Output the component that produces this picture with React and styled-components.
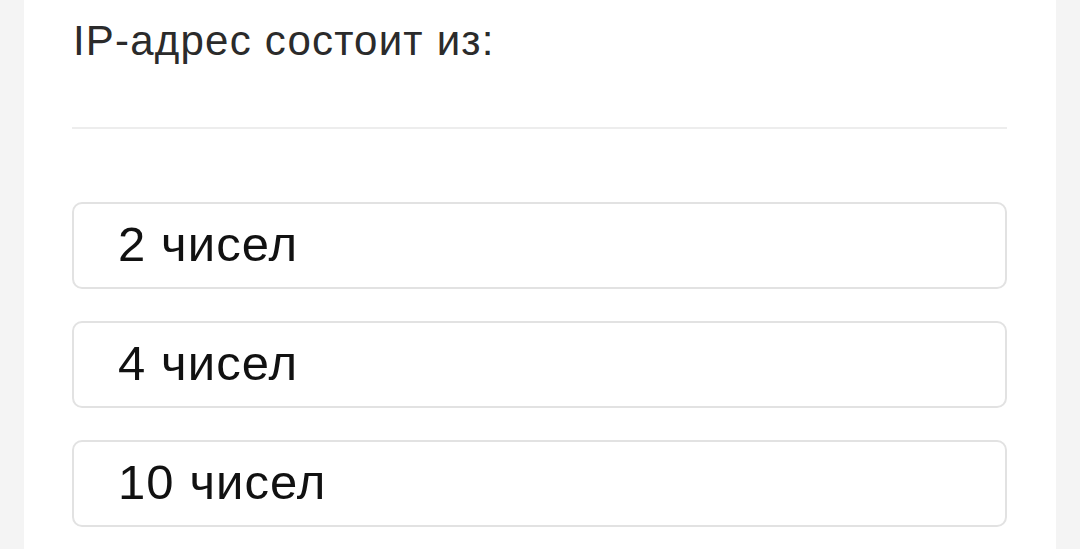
import React from "react";
import styled, { createGlobalStyle } from "styled-components";

const Global = createGlobalStyle`
  html, body { margin: 0; padding: 0; background: #f4f4f4; }
  body { font-family: "Liberation Sans", Arial, sans-serif; }
`;

const Page = styled.div`
  min-height: 549px;
  padding: 0 24px;
  box-sizing: border-box;
`;

const Card = styled.div`
  background: #ffffff;
  min-height: 549px;
  padding: 0 49px 0 48px;
  box-sizing: border-box;
  display: flex;
  flex-direction: column;
`;

const Title = styled.div`
  font-size: 42px;
  line-height: 48px;
  letter-spacing: 1.2px;
  color: #2b2b2b;
  padding: 17px 0 0 1px;
  height: 129px;
  box-sizing: border-box;
  border-bottom: 2px solid #ededed;
`;

const Options = styled.div`
  display: flex;
  flex-direction: column;
  gap: 32px;
  margin-top: 73px;
`;

const Option = styled.div`
  height: 87px;
  box-sizing: border-box;
  border: 2px solid #e2e2e2;
  border-radius: 10px;
  display: flex;
  align-items: center;
  padding: 0 0 3px 44px;
  font-size: 49px;
  letter-spacing: 1.1px;
  color: #111;
`;

const options = ["2 чисел", "4 чисел", "10 чисел"];

export default function App() {
  return (
    <Page>
      <Global />
      <Card>
        <Title>IP-адрес состоит из:</Title>
        <Options>
          {options.map((o) => (
            <Option key={o}>{o}</Option>
          ))}
        </Options>
      </Card>
    </Page>
  );
}
